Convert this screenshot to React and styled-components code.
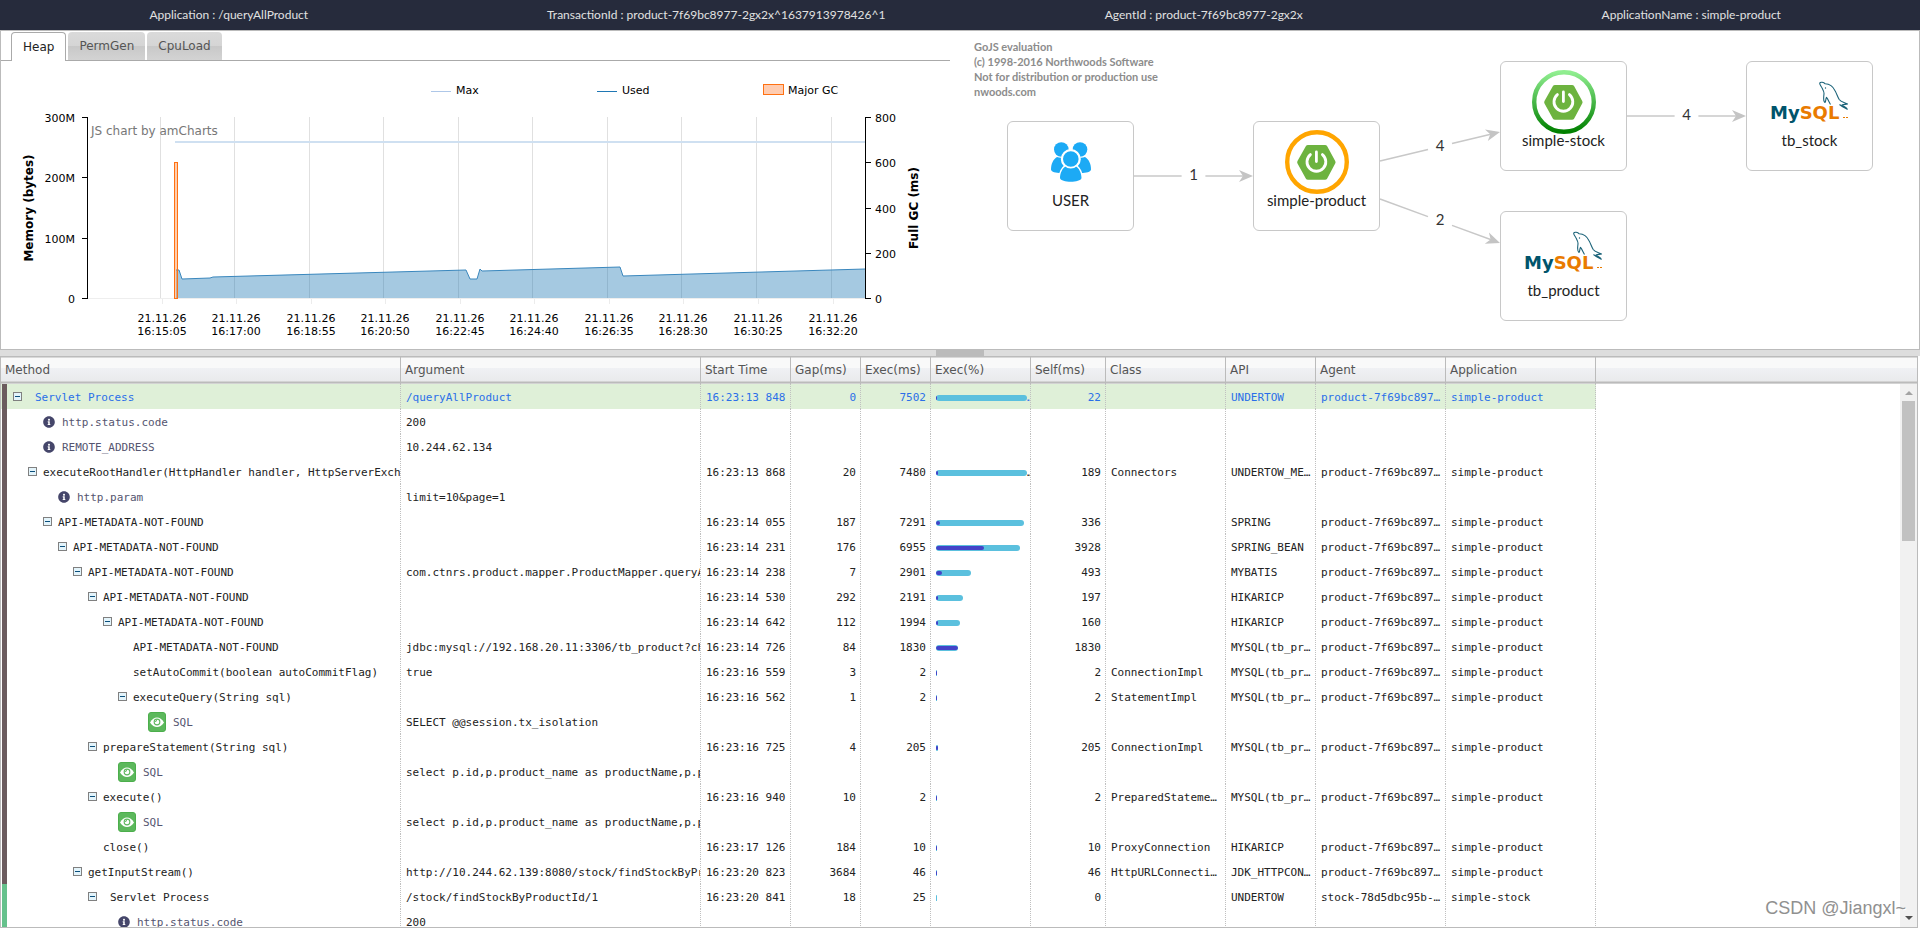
import React from 'react';
import styled, { createGlobalStyle } from 'styled-components';
import { FaInfoCircle } from 'react-icons/fa';

const HEADER_ITEMS = [
  { label: 'Application', value: '/queryAllProduct' },
  { label: 'TransactionId', value: 'product-7f69bc8977-2gx2x^1637913978426^1' },
  { label: 'AgentId', value: 'product-7f69bc8977-2gx2x' },
  { label: 'ApplicationName', value: 'simple-product' },
];

const TABS = ['Heap', 'PermGen', 'CpuLoad'];

const COLUMNS = [
  { title: 'Method', width: 400 },
  { title: 'Argument', width: 300 },
  { title: 'Start Time', width: 90 },
  { title: 'Gap(ms)', width: 70 },
  { title: 'Exec(ms)', width: 70 },
  { title: 'Exec(%)', width: 100 },
  { title: 'Self(ms)', width: 75 },
  { title: 'Class', width: 120 },
  { title: 'API', width: 90 },
  { title: 'Agent', width: 130 },
  { title: 'Application', width: 150 },
];

const TOTAL_EXEC = 7502;
const PRODUCT = { agent: 'product-7f69bc8977-2gx2x', app: 'simple-product' };
const STOCK = { agent: 'stock-78d5dbc95b-x7k2p', app: 'simple-stock' };
const API_MISSING = 'API-METADATA-NOT-FOUND';
const PRODUCT_SQL = 'select p.id,p.product_name as productName,p.p';

// depth is the tree level, "open" rows have a collapse toggle
const ROWS = [
  { depth: 0, open: true, entry: true, method: 'Servlet Process', arg: '/queryAllProduct', time: '16:23:13 848', gap: 0, exec: 7502, self: 22, api: 'UNDERTOW', ...PRODUCT, focused: true, cut: true },
  { depth: 1, info: true, method: 'http.status.code', arg: '200' },
  { depth: 1, info: true, method: 'REMOTE_ADDRESS', arg: '10.244.62.134' },
  { depth: 1, open: true, method: 'executeRootHandler(HttpHandler handler, HttpServerExch', time: '16:23:13 868', gap: 20, exec: 7480, self: 189, cls: 'Connectors', api: 'UNDERTOW_METHOD', ...PRODUCT, cut: true },
  { depth: 2, info: true, method: 'http.param', arg: 'limit=10&page=1' },
  { depth: 2, open: true, method: API_MISSING, time: '16:23:14 055', gap: 187, exec: 7291, self: 336, api: 'SPRING', ...PRODUCT },
  { depth: 3, open: true, method: API_MISSING, time: '16:23:14 231', gap: 176, exec: 6955, self: 3928, api: 'SPRING_BEAN', ...PRODUCT },
  { depth: 4, open: true, method: API_MISSING, arg: 'com.ctnrs.product.mapper.ProductMapper.queryA', time: '16:23:14 238', gap: 7, exec: 2901, self: 493, api: 'MYBATIS', ...PRODUCT },
  { depth: 5, open: true, method: API_MISSING, time: '16:23:14 530', gap: 292, exec: 2191, self: 197, api: 'HIKARICP', ...PRODUCT },
  { depth: 6, open: true, method: API_MISSING, time: '16:23:14 642', gap: 112, exec: 1994, self: 160, api: 'HIKARICP', ...PRODUCT },
  { depth: 7, method: API_MISSING, arg: 'jdbc:mysql://192.168.20.11:3306/tb_product?ch', time: '16:23:14 726', gap: 84, exec: 1830, self: 1830, api: 'MYSQL(tb_product)', ...PRODUCT },
  { depth: 7, method: 'setAutoCommit(boolean autoCommitFlag)', arg: 'true', time: '16:23:16 559', gap: 3, exec: 2, self: 2, cls: 'ConnectionImpl', api: 'MYSQL(tb_product)', ...PRODUCT },
  { depth: 7, open: true, method: 'executeQuery(String sql)', time: '16:23:16 562', gap: 1, exec: 2, self: 2, cls: 'StatementImpl', api: 'MYSQL(tb_product)', ...PRODUCT },
  { depth: 8, sql: true, method: 'SQL', arg: 'SELECT @@session.tx_isolation' },
  { depth: 5, open: true, method: 'prepareStatement(String sql)', time: '16:23:16 725', gap: 4, exec: 205, self: 205, cls: 'ConnectionImpl', api: 'MYSQL(tb_product)', ...PRODUCT },
  { depth: 6, sql: true, method: 'SQL', arg: PRODUCT_SQL },
  { depth: 5, open: true, method: 'execute()', time: '16:23:16 940', gap: 10, exec: 2, self: 2, cls: 'PreparedStatement', api: 'MYSQL(tb_product)', ...PRODUCT },
  { depth: 6, sql: true, method: 'SQL', arg: PRODUCT_SQL },
  { depth: 5, method: 'close()', time: '16:23:17 126', gap: 184, exec: 10, self: 10, cls: 'ProxyConnection', api: 'HIKARICP', ...PRODUCT },
  { depth: 4, open: true, method: 'getInputStream()', arg: 'http://10.244.62.139:8080/stock/findStockByPr', time: '16:23:20 823', gap: 3684, exec: 46, self: 46, cls: 'HttpURLConnection', api: 'JDK_HTTPCONNECTOR', ...PRODUCT },
  { depth: 5, open: true, entry: true, remote: true, method: 'Servlet Process', arg: '/stock/findStockByProductId/1', time: '16:23:20 841', gap: 18, exec: 25, self: 0, api: 'UNDERTOW', ...STOCK },
  { depth: 6, info: true, remote: true, method: 'http.status.code', arg: '200' },
];

const TIME_TICKS = [
  [159, '16:15:05'],
  [233, '16:17:00'],
  [308, '16:18:55'],
  [382, '16:20:50'],
  [457, '16:22:45'],
  [531, '16:24:40'],
  [606, '16:26:35'],
  [680, '16:28:30'],
  [755, '16:30:25'],
  [830, '16:32:20'],
];
const MEMORY_TICKS = [[56, '300M'], [116, '200M'], [177, '100M'], [237, '0']];
const GC_TICKS = [[56, '800'], [101, '600'], [147, '400'], [192, '200'], [237, '0']];
const USED_LINE =
  '175,209 178,209 181,218 209,217 212,216 465,209 469,218 476,218 479,208 481,210 619,206 622,215 864,208';

const NODES = [
  { name: 'USER', icon: 'user', x: 57, y: 90 },
  { name: 'simple-product', icon: 'slow', x: 303, y: 90 },
  { name: 'simple-stock', icon: 'good', x: 550, y: 30 },
  { name: 'tb_stock', icon: 'mysql', x: 796, y: 30 },
  { name: 'tb_product', icon: 'mysql', x: 550, y: 180 },
];

const LINKS = [
  { from: [184, 145], to: [303, 145], count: 1 },
  { from: [430, 130], to: [550, 101], count: 4 },
  { from: [430, 168], to: [550, 212], count: 2 },
  { from: [677, 85], to: [796, 85], count: 4 },
];

function MemoryChart() {
  return (
    <ChartSvg viewBox="0 0 949 288" role="img" aria-label="Heap memory usage">
      <line x1="430" x2="450" y1="30.5" y2="30.5" stroke="#aec7e8" />
      <text x="455" y="33">Max</text>
      <line x1="596" x2="616" y1="30.5" y2="30.5" stroke="#1f77b4" />
      <text x="621" y="33">Used</text>
      <rect x="762.5" y="23.5" width="20" height="10" fill="#ffccb0" stroke="#ff7112" />
      <text x="787" y="33">Major GC</text>

      {TIME_TICKS.map(([x, time]) => (
        <g key={time}>
          <line x1={x + 0.5} x2={x + 0.5} y1="56" y2="237" stroke="#e0e0e0" />
          <line x1={x + 2.5} x2={x + 2.5} y1="238" y2="243" stroke="#ececec" />
          <text x={x + 2} y="261" textAnchor="middle">21.11.26</text>
          <text x={x + 2} y="274" textAnchor="middle">{time}</text>
        </g>
      ))}
      <line x1="87" x2="864" y1="237.5" y2="237.5" stroke="#eee" />

      <polygon points={`175,237 ${USED_LINE} 864,237`} fill="#1f77b4" fillOpacity="0.4" />
      <polyline points={USED_LINE} fill="none" stroke="#3a87bd" />
      <line x1="174" x2="864" y1="81" y2="81" stroke="#cfe0f1" strokeWidth="2" />
      <rect x="173.5" y="101.5" width="3" height="136" fill="#ff7112" fillOpacity="0.35" stroke="#ff7112" />

      <line x1="86.5" x2="86.5" y1="56" y2="238" stroke="#000" />
      {MEMORY_TICKS.map(([y, label]) => (
        <g key={label}>
          <line x1="81" x2="87" y1={y + 0.5} y2={y + 0.5} stroke="#000" />
          <text x="74" y={y + 5} textAnchor="end">{label}</text>
        </g>
      ))}
      <line x1="864.5" x2="864.5" y1="56" y2="238" stroke="#000" />
      {GC_TICKS.map(([y, label]) => (
        <g key={label}>
          <line x1="864" x2="870" y1={y + 0.5} y2={y + 0.5} stroke="#000" />
          <text x="874" y={y + 5}>{label}</text>
        </g>
      ))}
      <AxisTitle transform="translate(32 147) rotate(-90)">Memory (bytes)</AxisTitle>
      <AxisTitle transform="translate(917 147) rotate(-90)">Full GC (ms)</AxisTitle>
      <ChartCredit x="90" y="74">JS chart by amCharts</ChartCredit>
    </ChartSvg>
  );
}

function UserIcon() {
  return (
    <svg width="64" height="64" viewBox="0 0 64 64" fill="#1caaf5">
      <circle cx="22.3" cy="19.5" r="7.300" />
      <circle cx="41" cy="19.5" r="7.300" />
      <path d="M12 39.500c0-5.500 2-10 6-12.500q5 2 9-1v17h-5c-5 0-10-1-10-3.500z" />
      <path d="M52 39.500c0-5.500-2-10-6-12.500q-5 2-9-1v17h5c5 0 10-1 10-3.500z" />
      <circle cx="31.800" cy="29" r="10" fill="#fff" />
      <path
        d="M21 48c0-5 2.500-10 6-12c3 2 6.500 2 9.500 0c3.500 2 6 7 6 12c-1 5-20.500 5-21.500 0z"
        stroke="#fff"
        strokeWidth="3"
        paintOrder="stroke"
      />
      <circle cx="31.800" cy="29" r="8.600" stroke="#fff" strokeWidth="1.600" />
    </svg>
  );
}

function ServerIcon({ good }) {
  return (
    <svg width="64" height="64" viewBox="0 0 64 64">
      <defs>
        <linearGradient id="ring" x1="0" y1="0" x2="0" y2="1">
          <stop offset="0" stopColor="#90ee90" />
          <stop offset="1" stopColor="#008000" />
        </linearGradient>
      </defs>
      <circle cx="32" cy="32" r="29.8" fill="none" strokeWidth="4.400" stroke={good ? 'url(#ring)' : '#ffa500'} />
      <path
        d="M23 15h17q1.500 0 2.200 1.200l8 14.800q.8 1.300 0 2.600l-8 15q-.7 1.200-2.200 1.200H23q-1.500 0-2.200-1.200l-8.300-15q-.7-1.300 0-2.600l8.300-14.800Q21.500 15 23 15z"
        fill="#6db33f"
      />
      <path
        d="M25.400 24.600a9.400 9.400 0 1 0 12 0M31.400 22v9.500"
        fill="none"
        stroke="#fff"
        strokeWidth="2.800"
        strokeLinecap="round"
      />
    </svg>
  );
}

function MysqlIcon() {
  return (
    <svg width="80" height="64" viewBox="0 0 80 64">
      <LogoText x="0" y="49">
        <tspan fill="#00546b">My</tspan>
        <tspan fill="#e97b00">SQL</tspan>
      </LogoText>
      <path d="M73 47.500h2M76 47.500h2" stroke="#e97b00" />
      <path
        d="M60.500 34.500C59 32 58 29 56.500 27.300c-1 2-.5 4-1.500 5.200c-2.500-2-1-6-1-9.200c0-2-1-3.500-1.800-5C51 16 49.500 14.500 49.700 13c.8-1.300 4-.8 5.500.8c4.500 0 8 3 10 7.200c1.500 2.800 2.500 6 4 8.500c1.500 2.300 5.500 3 8.300 4.500c-2 .5-4 .3-5.500 1c1.500 1.500 4.500 2.300 5.300 4.300c-2.500-1.300-5.500-2.800-7.800-4.800"
        fill="none"
        stroke="#1b6379"
        strokeWidth="1.100"
        strokeLinejoin="round"
      />
      <circle cx="55.500" cy="18" r="0.700" fill="#1b6379" />
    </svg>
  );
}

function NodeIcon({ kind }) {
  if (kind === 'user') return <UserIcon />;
  if (kind === 'mysql') return <MysqlIcon />;
  return <ServerIcon good={kind === 'good'} />;
}

function Link({ from, to, count }) {
  const [x1, y1] = from;
  const [x2, y2] = to;
  const at = t => [x1 + (x2 - x1) * t, y1 + (y2 - y1) * t];
  const [gapX1, gapY1] = at(0.4);
  const [gapX2, gapY2] = at(0.6);
  const [midX, midY] = at(0.5);
  const angle = (Math.atan2(y2 - y1, x2 - x1) * 180) / Math.PI;

  return (
    <g stroke="#c8c8c8" strokeWidth="1.500">
      <line x1={x1} y1={y1} x2={gapX1} y2={gapY1} />
      <line x1={gapX2} y1={gapY2} x2={x2 - 4} y2={y2 - ((y2 - y1) * 4) / (x2 - x1)} />
      <path
        d="M0 0L-14 -6L-10 0L-14 6z"
        fill="#c4c4c4"
        stroke="none"
        transform={`translate(${x2} ${y2}) rotate(${angle})`}
      />
      <LinkCount x={midX} y={midY + 4}>{count}</LinkCount>
    </g>
  );
}

function ServerMap() {
  return (
    <MapPane>
      <MapNotice>
        GoJS evaluation
        <br />
        (c) 1998-2016 Northwoods Software
        <br />
        Not for distribution or production use
        <br />
        nwoods.com
      </MapNotice>
      <LinkLayer width="969" height="318">
        {LINKS.map(link => (
          <Link key={link.from.concat(link.to).join()} {...link} />
        ))}
      </LinkLayer>
      {NODES.map(node => (
        <Node key={node.name} $x={node.x} $y={node.y}>
          <NodeIcon kind={node.icon} />
          <NodeName>{node.name}</NodeName>
        </Node>
      ))}
    </MapPane>
  );
}

function MethodCell({ row }) {
  return (
    <MethodLine>
      <AgentStripe $remote={row.remote} />
      <Indent $depth={row.depth} />
      <ToggleSlot>{row.open && <Toggle type="button" aria-label="Collapse" />}</ToggleSlot>
      {row.info && <FaInfoCircle size={12} color="#45466a" />}
      {row.sql && (
        <SqlButton type="button" aria-label="Show SQL">
          <svg width="14" height="12" viewBox="0 0 14 12">
            <path d="M0 6.500C2 3 4.500 1.500 7 1.500s5 1.500 7 5C12 9.500 9.500 11 7 11S2 9.500 0 6.500z" fill="#fff" />
            <circle cx="7" cy="6" r="3.400" fill="#5cb85c" />
            <circle cx="7" cy="6" r="2.300" fill="#fff" />
            <path d="M5.500 6q0-1.500 1.500-1.500" fill="none" stroke="#5cb85c" />
          </svg>
        </SqlButton>
      )}
      <MethodName $spaced={row.info || row.sql || row.entry} $muted={row.info || row.sql}>
        {row.method}
      </MethodName>
    </MethodLine>
  );
}

function ExecBar({ row }) {
  if (row.exec === undefined) return null;
  return (
    <BarLine>
      <BarSpace>
        <Bar style={{ width: `${(row.exec / TOTAL_EXEC) * 100}%` }}>
          <SelfBar style={{ width: `${(row.self / row.exec) * 100}%` }} />
        </Bar>
      </BarSpace>
      {row.cut && '…'}
    </BarLine>
  );
}

function CallTree() {
  return (
    <Grid>
      <TableClip>
        <Table>
          <colgroup>
            {COLUMNS.map(col => (
              <Col key={col.title} $width={col.width} />
            ))}
            <col />
          </colgroup>
          <thead>
            <tr>
              {COLUMNS.map(col => (
                <HeadCell key={col.title} scope="col">{col.title}</HeadCell>
              ))}
              <HeadFill />
            </tr>
          </thead>
          <tbody>
            {ROWS.map((row, i) => (
              <Row key={i} $focused={row.focused}>
                <MethodTd>
                  <MethodCell row={row} />
                </MethodTd>
                <Cell>{row.arg}</Cell>
                <Cell>{row.time}</Cell>
                <Cell $right>{row.gap}</Cell>
                <Cell $right>{row.exec}</Cell>
                <Cell>
                  <ExecBar row={row} />
                </Cell>
                <Cell $right>{row.self}</Cell>
                <Cell $ellipsis>{row.cls}</Cell>
                <Cell $ellipsis>{row.api}</Cell>
                <Cell $ellipsis>{row.agent}</Cell>
                <Cell $ellipsis>{row.app}</Cell>
                <FillCell />
              </Row>
            ))}
          </tbody>
        </Table>
      </TableClip>
      <ScrollSide>
        <ScrollCap />
        <ScrollTrack>
          <Arrow viewBox="0 0 8 4">
            <path d="M0 4L4 0L8 4z" fill="#a3a3a3" />
          </Arrow>
          <ScrollThumb />
          <Arrow viewBox="0 0 8 4">
            <path d="M0 0L4 4L8 0z" fill="#505050" />
          </Arrow>
        </ScrollTrack>
      </ScrollSide>
    </Grid>
  );
}

export default function App() {
  return (
    <Page>
      <GlobalStyle />
      <TopBar>
        {HEADER_ITEMS.map(item => (
          <TopItem key={item.label}>
            {item.label} : {item.value}
          </TopItem>
        ))}
      </TopBar>
      <Panels>
        <ChartPane>
          <TabList role="tablist">
            {TABS.map((tab, i) => (
              <Tab key={tab} type="button" role="tab" aria-selected={i === 0} $active={i === 0}>
                {tab}
              </Tab>
            ))}
          </TabList>
          <MemoryChart />
        </ChartPane>
        <ServerMap />
      </Panels>
      <Splitter>
        <SplitterGrip />
      </Splitter>
      <CallTree />
      <Watermark>CSDN @Jiangxl~</Watermark>
    </Page>
  );
}

const GlobalStyle = createGlobalStyle`
  * {
    box-sizing: border-box;
  }
  body {
    margin: 0;
    background: #fff;
    font-family: 'DejaVu Sans', sans-serif;
  }
`;

const headGradient = `linear-gradient(
  #d8d8d8 1px, #f9f9f9 1px, #f9f9f9 11px, #f0f1f4 11px, #e9eaec 24px,
  #d3d3d3 24px, #d3d3d3 25px, #bbb 25px, #bbb 26px, #d3d3d3 26px
)`;

const Page = styled.div`
  position: relative;
  display: flex;
  flex-direction: column;
  height: 100vh;
  overflow: hidden;
`;

const TopBar = styled.header`
  flex: none;
  display: grid;
  grid-template-columns: repeat(4, 1fr);
  height: 30px;
  margin: 0 -15px;
  background: #262b3c;
  color: #e1e1e1;
  font: 12px/30px Lato, sans-serif;
`;

const TopItem = styled.div`
  text-align: center;
  white-space: nowrap;
`;

const Panels = styled.div`
  flex: none;
  display: flex;
  border: 1px solid #bbb;
`;

const ChartPane = styled.section`
  flex: 949 1 0;
  min-width: 0;
`;

const TabList = styled.div`
  display: flex;
  align-items: flex-end;
  gap: 2px;
  height: 30px;
  padding-left: 10px;
  border-bottom: 1px solid #aaa;
`;

const Tab = styled.button`
  height: ${props => (props.$active ? 29 : 28)}px;
  margin-bottom: ${props => (props.$active ? -1 : 0)}px;
  padding: 0 11px;
  border: ${props => (props.$active ? '1px solid #aaa' : '0')};
  border-bottom: 0;
  border-radius: 4px 4px 0 0;
  background: ${props =>
    props.$active ? '#fff' : 'linear-gradient(#dadada, #d5d5d5 50%, #c8c8c8 50%, #d3d3d3)'};
  color: ${props => (props.$active ? '#222' : '#555')};
  font: 12px/28px 'DejaVu Sans', sans-serif;
`;

const ChartSvg = styled.svg`
  display: block;
  width: 100%;
  font-size: 11px;
`;

const AxisTitle = styled.text`
  font-size: 12px;
  font-weight: bold;
  text-anchor: middle;
`;

const ChartCredit = styled.text`
  font-size: 12px;
  fill: #777;
`;

const MapPane = styled.section`
  position: relative;
  flex: 969 1 0;
  min-width: 0;
  overflow: hidden;
`;

const MapNotice = styled.p`
  margin: 0;
  padding: 8px 24px;
  color: #8c8c8c;
  font: bold 11px/15px Lato, sans-serif;
`;

const LinkLayer = styled.svg`
  position: absolute;
  left: 0;
  top: 0;
`;

const LinkCount = styled.text`
  fill: #333;
  stroke: none;
  font: 15px Lato, sans-serif;
  text-anchor: middle;
`;

const Node = styled.div`
  position: absolute;
  left: ${props => props.$x}px;
  top: ${props => props.$y}px;
  display: flex;
  flex-direction: column;
  align-items: center;
  width: 127px;
  height: 110px;
  padding-top: 8px;
  border: 1px solid #c8c8c8;
  border-radius: 6px;
  background: #fff;
`;

const NodeName = styled.div`
  color: #222;
  font: 15px/13px Lato, sans-serif;
`;

const LogoText = styled.text`
  font: bold 18px 'DejaVu Sans', sans-serif;
`;

const Splitter = styled.div`
  flex: none;
  display: flex;
  justify-content: center;
  height: 6px;
  background: #ddd;
`;

const SplitterGrip = styled.div`
  width: 48px;
  background: #bbb;
`;

const Grid = styled.section`
  flex: 1;
  display: flex;
  min-height: 0;
  margin-right: 2px;
  border: 1px solid #bbb;
`;

const TableClip = styled.div`
  flex: 1;
  min-width: 0;
  overflow: hidden;
`;

const Table = styled.table`
  width: 100%;
  table-layout: fixed;
  border-spacing: 0;
  font: 11px/23px 'DejaVu Sans Mono', monospace;
`;

const Col = styled.col`
  width: ${props => props.$width}px;
`;

const HeadCell = styled.th`
  height: 27px;
  padding: 0 4px 2px;
  border-right: 1px solid #bbb;
  background: ${headGradient};
  color: #555;
  font: 12px/24px 'DejaVu Sans', sans-serif;
  text-align: left;
  white-space: nowrap;
`;

const HeadFill = styled.td`
  padding: 0;
  background: ${headGradient};
`;

const Cell = styled.td`
  height: 25px;
  padding: 2px 4px 0 5px;
  ${props => !props.$ellipsis && !props.$right && 'padding-right: 0;'}
  overflow: hidden;
  border-right: 1px dotted silver;
  text-align: ${props => (props.$right ? 'right' : 'left')};
  text-overflow: ${props => (props.$ellipsis ? 'ellipsis' : 'clip')};
  white-space: nowrap;
`;

const MethodTd = styled(Cell)`
  padding: 0;
`;

const FillCell = styled.td`
  padding: 0;
`;

const Row = styled.tr`
  color: ${props => (props.$focused ? '#2a6fe8' : '#222')};

  ${Cell}, ${MethodTd} {
    background: ${props => (props.$focused ? '#dff0d8' : 'none')};
  }
`;

const MethodLine = styled.div`
  display: flex;
  align-items: center;
  height: 25px;
  padding-left: 1px;

  > * {
    flex: none;
  }
`;

const AgentStripe = styled.span`
  align-self: stretch;
  width: 5px;
  background: ${props => (props.$remote ? '#66c18c' : '#6b5b5e')};
`;

const Indent = styled.span`
  width: ${props => 6 + props.$depth * 15}px;
`;

const ToggleSlot = styled.span`
  display: flex;
  width: 15px;
`;

const Toggle = styled.button`
  width: 9px;
  height: 9px;
  padding: 0;
  border: 1px solid #808080;
  background: linear-gradient(#0b4f7c, #0b4f7c) center / 5px 1px no-repeat, #e3f4fb;
`;

const SqlButton = styled.button`
  display: flex;
  align-items: center;
  justify-content: center;
  width: 18px;
  height: 20px;
  padding: 0;
  border: 1px solid #4cae4c;
  border-radius: 3px;
  background: #5cb85c;
`;

const MethodName = styled.span`
  padding-top: 2px;
  margin-left: ${props => (props.$spaced ? 7 : 0)}px;
  color: ${props => (props.$muted ? '#555570' : 'inherit')};
`;

const BarLine = styled.div`
  display: flex;
  align-items: center;
  height: 23px;
  overflow: hidden;
`;

const BarSpace = styled.div`
  flex: none;
  width: 91px;
`;

const Bar = styled.div`
  display: flex;
  align-items: center;
  min-width: 1px;
  height: 6px;
  border-radius: 3px;
  background: #5bc0de;
  overflow: hidden;
`;

const SelfBar = styled.div`
  height: 4px;
  border-radius: 2px;
  background: #4343c8;
`;

const ScrollSide = styled.div`
  display: flex;
  flex-direction: column;
  width: 17px;
`;

const ScrollCap = styled.div`
  flex: none;
  height: 27px;
  background: ${headGradient};
`;

const ScrollTrack = styled.div`
  flex: 1;
  display: flex;
  flex-direction: column;
  align-items: center;
  padding: 7px 0;
  background: #f1f1f1;
`;

const Arrow = styled.svg`
  width: 8px;
  height: 4px;
`;

const ScrollThumb = styled.div`
  width: 13px;
  height: 140px;
  margin: 6px 0 auto;
  background: #c1c1c1;
`;

const Watermark = styled.div`
  position: absolute;
  right: 14px;
  bottom: 8px;
  color: #909090;
  font: 18px/24px 'Liberation Sans', sans-serif;
  text-shadow: 1px 1px 0 #fff;
`;
